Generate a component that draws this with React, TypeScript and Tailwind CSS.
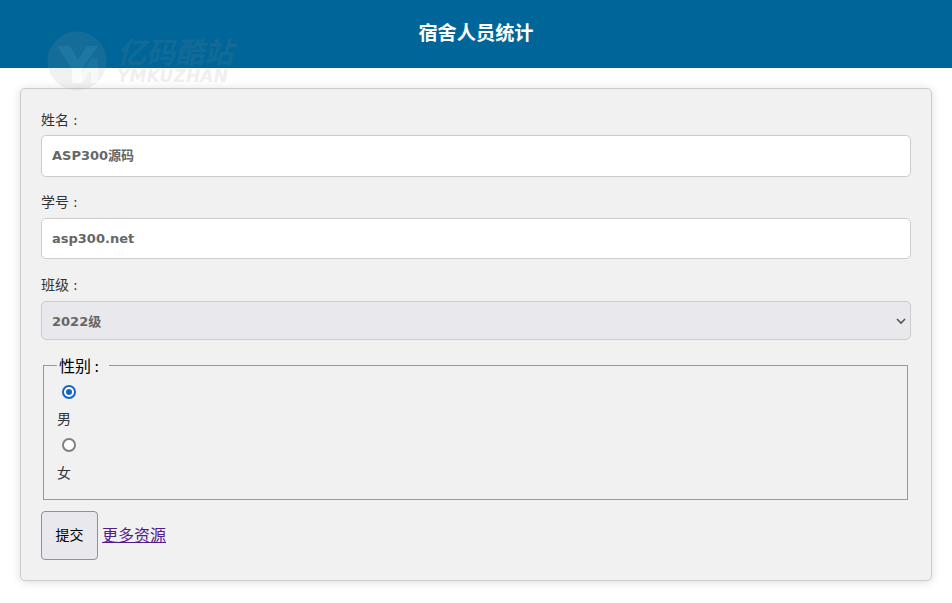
const sans = 'font-["DejaVu_Sans","Noto_Sans_CJK_SC",sans-serif]'

function Label({ text, className }: { text: string; className: string }) {
  return (
    <label className={`block h-[30px] text-[14px] leading-[20px] text-[#333] ${className}`}>
      {text}
      <span className="ml-[4px]">:</span>
    </label>
  )
}

// faint site watermark sitting over the header edge
function Watermark() {
  return (
    <div className="pointer-events-none absolute left-[47px] top-[31px] flex opacity-[0.13]">
      <svg width="60" height="60" viewBox="0 0 60 60">
        <circle cx="30" cy="30" r="29.5" fill="#9a9a9a" />
        <path d="M10 15h13l8 14 9-14h11L35 38v14H25V38z" fill="#fff" opacity="0.75" />
        <path d="M28 52l17-25h6v25h-7V38l-9 14z" fill="#fff" opacity="0.55" />
      </svg>
      <div className="ml-[10px] mt-[9px] flex flex-col">
        <span className="text-[29px] font-bold italic leading-[26px] text-[#8a8a8a]">亿码酷站</span>
        <span className="mt-[1px] text-[17px] font-bold italic leading-[18px] tracking-[0.2px] text-[#8a8a8a]">YMKUZHAN</span>
      </div>
    </div>
  )
}

const inputClass =
  'block w-full rounded-[5px] border border-[#ccc] bg-white px-[10px] text-[13px] font-bold text-[#666] outline-none'

export default function App() {
  return (
    <div className={`${sans} relative min-h-[603px] bg-white`}>
      <header className="flex h-[68px] items-center justify-center bg-[#006699]">
        <h1 className="text-[19.2px] font-bold text-white">宿舍人员统计</h1>
      </header>
      <Watermark />

      <form className="mx-[20px] mt-[20px] h-[493px] rounded-[5px] border border-[#ccc] bg-[#f1f1f1] px-[20px] pt-[16px] shadow-[0_1px_10px_rgba(0,0,0,0.14)]">
        <Label text="姓名" className="pt-[5px]" />
        <input readOnly value="ASP300源码" className={`${inputClass} mb-[11px] h-[42px] pb-[3px]`} />

        <Label text="学号" className="pt-[4px]" />
        <input readOnly value="asp300.net" className={`${inputClass} mb-[12px] h-[41px]`} />

        <Label text="班级" className="pt-[4px]" />
        <div className="relative h-[39px] w-full rounded-[5px] border border-[#ccc] bg-[#e9e9ed] px-[10px] text-[13px] font-bold leading-[39px] text-[#666]">
          2022级
          <svg className="absolute right-[3px] top-[13px]" width="12" height="12" viewBox="0 0 12 12" fill="none">
            <path d="M2 4l4 4 4-4" stroke="#555" strokeWidth="1.6" />
          </svg>
        </div>

        <fieldset className="ml-[2px] mr-[3px] mt-[16px] h-[144px] border border-[#999] px-[13px]">
          <legend className="px-[2px] pr-[10px] text-[16px] leading-[19px] text-black">
            <span className="relative top-[1px]">性别<span className="ml-[3px]">:</span></span>
          </legend>
          <div className="mt-[8px] flex h-[18px] items-center pl-[5px]">
            <span className="flex h-[14px] w-[14px] items-center justify-center rounded-full border-2 border-[#1565c0] bg-white">
              <span className="h-[6px] w-[6px] rounded-full bg-[#1565c0]" />
            </span>
          </div>
          <div className="mt-[8px] h-[20px] text-[14px] leading-[20px] text-[#333]">男</div>
          <div className="mt-[7px] flex h-[18px] items-center pl-[5px]">
            <span className="h-[14px] w-[14px] rounded-full border-2 border-[#808080] bg-white" />
          </div>
          <div className="mt-[9px] h-[20px] text-[14px] leading-[20px] text-[#333]">女</div>
        </fieldset>

        <div className="mt-[11px] flex items-center">
          <button type="button" className="h-[49px] w-[57px] rounded-[4px] border border-[#8f8f9d] bg-[#e9e9ed] text-[14px] text-black">
            提交
          </button>
          <a href="#" className="ml-[4px] text-[16px] text-[#551a8b] underline">更多资源</a>
        </div>
      </form>
    </div>
  )
}
